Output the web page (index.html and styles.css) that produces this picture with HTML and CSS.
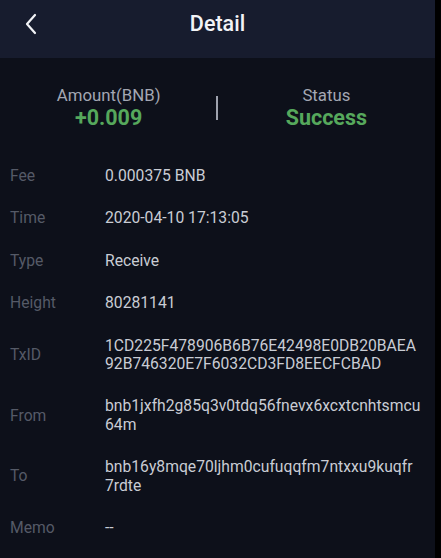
FILE: index.html
```html
<!DOCTYPE html>
<html lang="en">
<head>
  <meta charset="UTF-8">
  <title>Detail</title>
  <link rel="stylesheet" href="styles.css">
</head>
<body>

  <div class="screen">
    <!-- Header -->
    <div class="header">
      <span class="back">
        <svg width="14" height="22" viewBox="0 0 14 22">
          <path d="M11 2 L3 11 L11 20" fill="none" stroke="#f2f3f6" stroke-width="2.2" stroke-linecap="round" stroke-linejoin="round"/>
        </svg>
      </span>
      <h1>Detail</h1>
    </div>

    <!-- Summary -->
    <div class="summary">
      <div class="summary-col">
        <div class="summary-label">Amount(BNB)</div>
        <div class="summary-value">+0.009</div>
      </div>
      <div class="divider"></div>
      <div class="summary-col">
        <div class="summary-label">Status</div>
        <div class="summary-value">Success</div>
      </div>
    </div>

    <!-- Details -->
    <div class="details">
      <div class="row"><span class="label">Fee</span><span class="value">0.000375 BNB</span></div>
      <div class="row"><span class="label">Time</span><span class="value">2020-04-10 17:13:05</span></div>
      <div class="row"><span class="label">Type</span><span class="value">Receive</span></div>
      <div class="row"><span class="label">Height</span><span class="value">80281141</span></div>
      <div class="row"><span class="label">TxID</span><span class="value">1CD225F478906B6B76E42498E0DB20BAEA<br>92B746320E7F6032CD3FD8EECFCBAD</span></div>
      <div class="row"><span class="label">From</span><span class="value">bnb1jxfh2g85q3v0tdq56fnevx6xcxtcnhtsmcu<br>64m</span></div>
      <div class="row"><span class="label">To</span><span class="value">bnb16y8mqe70ljhm0cufuqqfm7ntxxu9kuqfr<br>7rdte</span></div>
      <div class="row"><span class="label">Memo</span><span class="value">--</span></div>
    </div>
  </div>

</body>
</html>
```

FILE: styles.css
```css
body {
  margin: 0;
  background: #000;
  font-family: Roboto, "Liberation Sans", sans-serif;
}

.screen {
  width: 435px;
  height: 558px;
  background: #0d101a;
  overflow: hidden;
}

.header {
  height: 58px;
  box-sizing: border-box;
  padding-top: 10px;
  background: #171c2e;
  display: flex;
  align-items: flex-start;
  justify-content: center;
  position: relative;
}

.header h1 {
  margin: 0;
  color: #f2f3f6;
  font-size: 21.5px;
  font-weight: 500;
  line-height: 28px;
}

.back {
  position: absolute;
  left: 24px;
  top: 13px;
}

.summary {
  height: 97px;
  display: flex;
  align-items: center;
}

.summary-col {
  flex: 1;
  text-align: center;
  padding-top: 1px;
}

.summary-label {
  color: #a3a7b3;
  font-size: 16.8px;
  line-height: 22px;
}

.summary-value {
  color: #56a85c;
  font-size: 21.5px;
  font-weight: 700;
  line-height: 24px;
}

.divider {
  width: 1.5px;
  height: 24px;
  background: #9ea2ae;
  margin-top: 2px;
  margin-left: -1px;
}

.row {
  display: flex;
  align-items: center;
  padding: 12px 0 12px 10px;
  font-size: 15.7px;
  line-height: 18.4px;
}

.label {
  width: 95px;
  color: #555a67;
}

.value {
  color: #c9ccd4;
}
```
